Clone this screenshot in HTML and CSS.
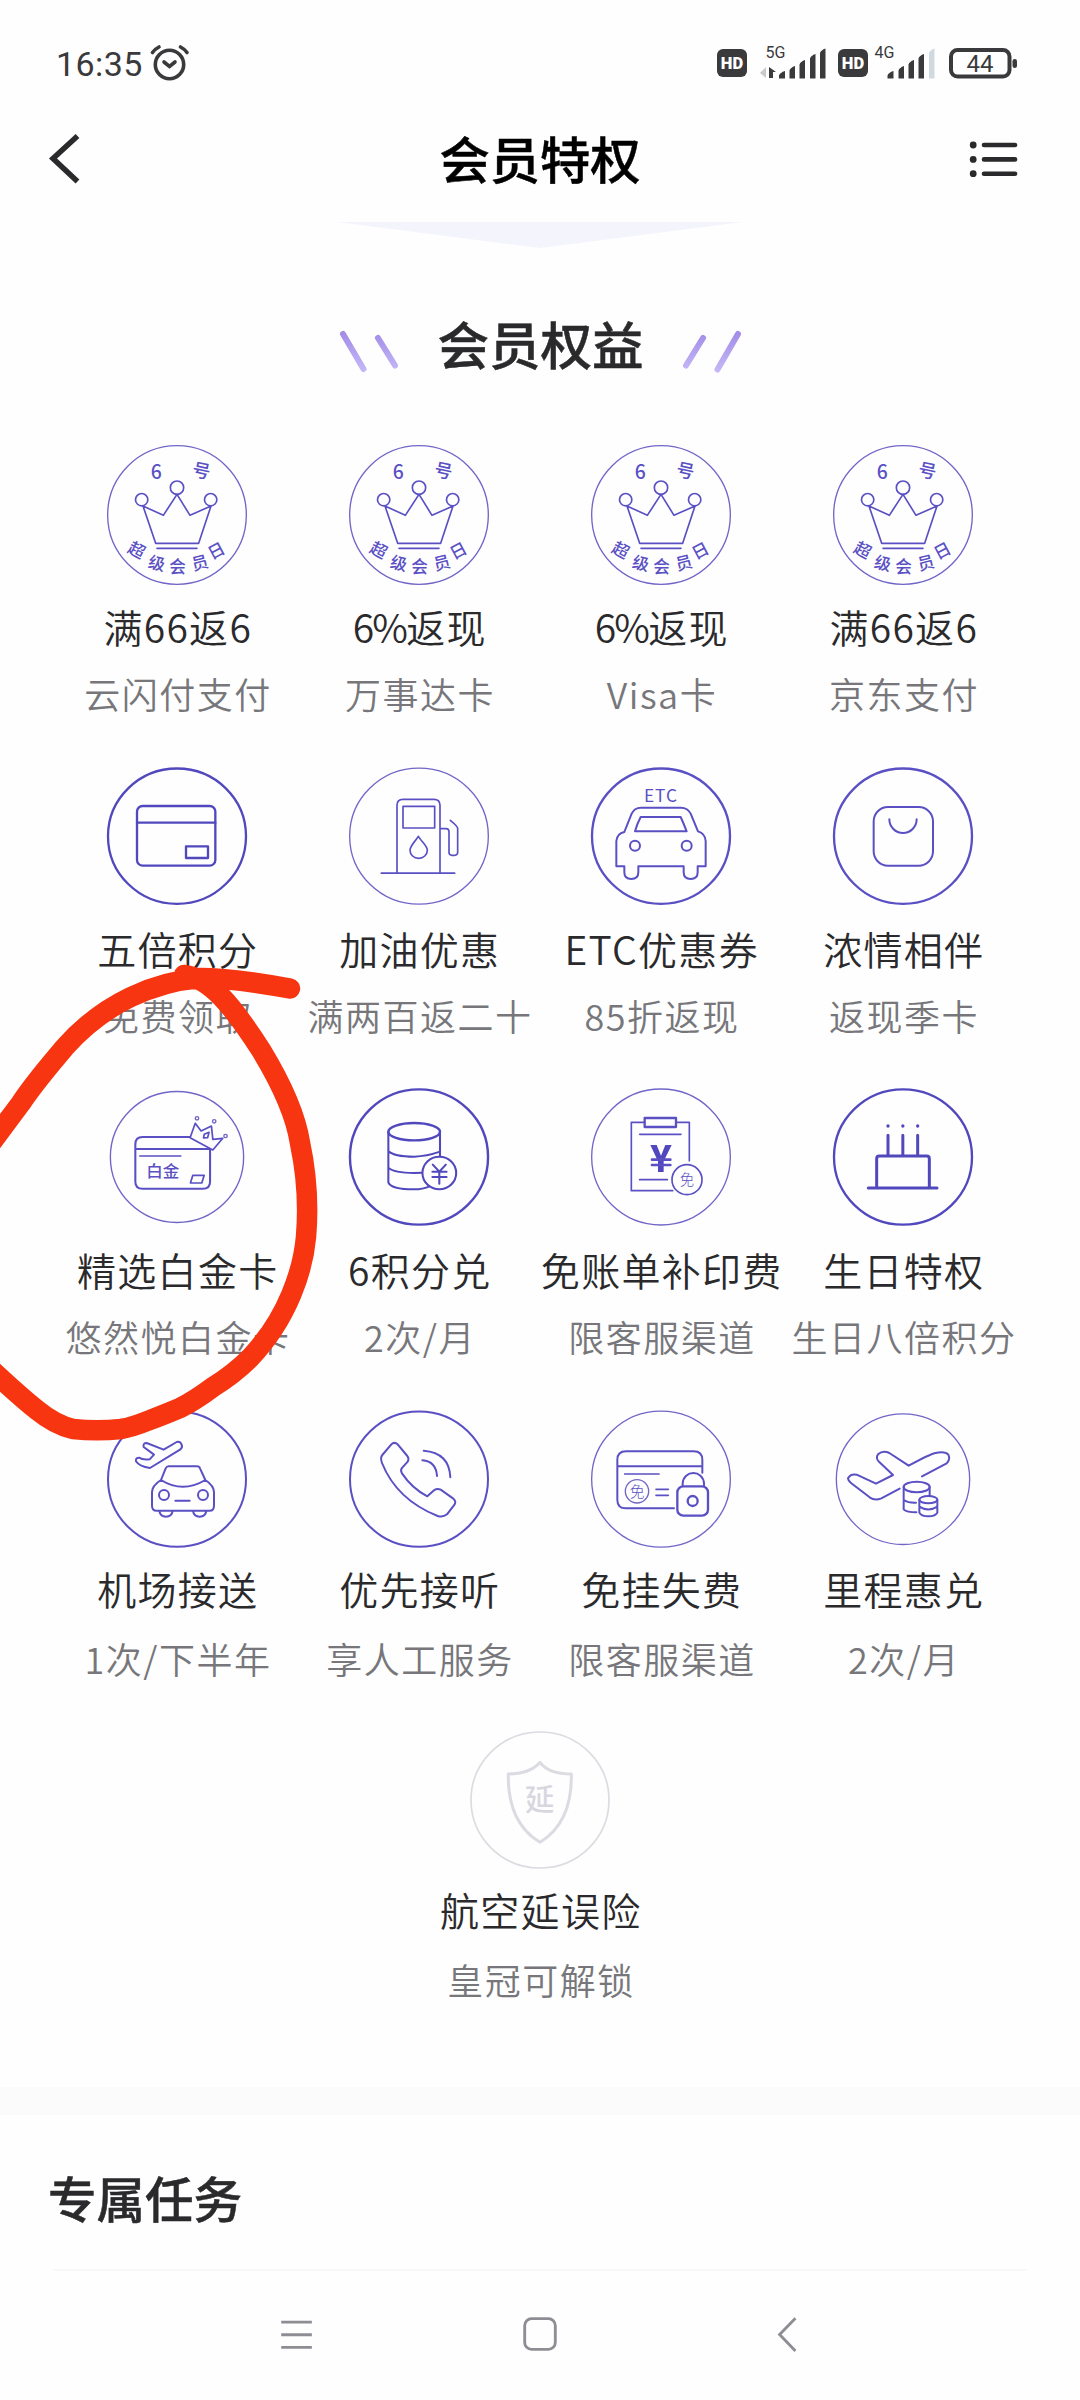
FILE: index.html
```html
<!DOCTYPE html>
<html lang="zh-CN">
<head>
<meta charset="utf-8">
<title>会员特权</title>
<link rel="stylesheet" href="styles.css">
</head>
<body>
<div class="screen">
  <div class="status">
    <span class="clock">16:35</span>
    <svg class="alarm" viewBox="149 43 42 40"><circle cx="169.500" cy="64.500" r="14.200"/><path d="M164 62l5.500 4.500 5.500-4.500M152.500 52.500q2.500-3.500 6.500-5.500M187 52.500q-2.500-3.500-6.500-5.500"/></svg>
    <svg class="signals" viewBox="717 40 301 45">
      <rect x="717" y="49" width="30" height="28" rx="6"/>
      <rect x="838" y="49" width="30" height="28" rx="6"/>
      <text class="hd" x="732" y="69">HD</text><text class="hd" x="853" y="69">HD</text>
      <text class="net" x="765.500" y="58">5G</text><text class="net" x="874.500" y="58">4G</text>
      <path fill="#c9cacc" d="M766 67v11l-6-5z"/>
      <path d="M769 67l7 5h-3v6h-4z"/>
      <path d="M779 78.500v-3q1-3 6-4.500v7.500zM789.500 78.500v-8q1-3 5.500-4.500v12.500zM799.500 78.500v-14q1-3 5.500-4.500v18.500zM810 78.500v-20q1-3 5.500-4.500v24.500zM820 78.500v-25.500q1-3 5.500-4.500v30z"/>
      <path d="M887.500 78.500v-3q1-3 6-4.500v7.500zM898.500 78.500v-8q1-3 5.500-4.500v12.500zM908.500 78.500v-14q1-3 5.500-4.500v18.500zM918.500 78.500v-20q1-3 5.500-4.500v24.500z"/>
      <path fill="#d0d8e0" d="M929 78.500v-25.500q1-3 5.500-4.500v30z"/>
      <rect class="battery" x="951" y="50" width="58.500" height="26.500" rx="6.500"/>
      <rect x="1012.500" y="59" width="4.500" height="9" rx="2.200"/>
      <text class="level" x="980" y="72">44</text>
    </svg>
  </div>

  <header class="topbar">
    <svg class="back" viewBox="0 0 32 48"><path d="M29.500 1L5 23.500 29.500 46.500"/></svg>
    <h1>会员特权</h1>
    <svg class="list" viewBox="970 140 48 37"><circle cx="973.200" cy="144" r="3.400"/><circle cx="973.200" cy="158.400" r="3.400"/><circle cx="973.200" cy="172.700" r="3.400"/><path d="M984 144h31M984 158.400h31M984 172.700h31"/></svg>
  </header>

  <div class="notch"></div>

  <div class="heading">
    <svg viewBox="0 0 60 42"><defs><linearGradient id="fade" gradientUnits="userSpaceOnUse" x1="0" y1="0" x2="0" y2="42"><stop offset="0" stop-color="#a08ae6"/><stop offset="1" stop-color="#c6b8f8"/></linearGradient></defs><path stroke="url(#fade)" d="M3 4L23.500 39M38 8L55 35.500"/></svg>
    <h2>会员权益</h2>
    <svg viewBox="0 0 60 42"><path stroke="url(#fade)" d="M57 4L36.500 39.500M22 8L5 35.500"/></svg>
  </div>

  <svg class="defs"><symbol id="crown" viewBox="127 59 450 450">
    <circle class="thin" cx="352" cy="284" r="208"/>
    <circle cx="352" cy="202" r="20"/><circle cx="246" cy="238" r="18.500"/><circle cx="453" cy="238" r="18.500"/>
    <path d="M250 257L311 285 352 222 391 285 454 257 417 369H288zM292 384H412"/>
    <g class="label seal"><text transform="translate(290 155)" y="20" font-size="58">6</text>
    <text transform="translate(425 154) rotate(12)" y="17" font-size="54">号</text>
    <text transform="translate(230 391) rotate(28)" y="16" font-size="50">超</text>
    <text transform="translate(291 431) rotate(14)" y="16" font-size="50">级</text>
    <text transform="translate(354 443)" y="16" font-size="50">会</text>
    <text transform="translate(421 430) rotate(-14)" y="16" font-size="50">员</text>
    <text transform="translate(471 393) rotate(-28)" y="16" font-size="50">日</text></g>
  </symbol></svg>

  <main class="grid">
    <section class="item first"><svg class="icon"><use href="#crown"/></svg><h3>满66返6</h3><p>云闪付支付</p></section>
    <section class="item first"><svg class="icon"><use href="#crown"/></svg><h3><span class="tight">6%</span>返现</h3><p>万事达卡</p></section>
    <section class="item first"><svg class="icon"><use href="#crown"/></svg><h3><span class="tight">6%</span>返现</h3><p>Visa卡</p></section>
    <section class="item first"><svg class="icon"><use href="#crown"/></svg><h3>满66返6</h3><p>京东支付</p></section>

    <section class="item"><svg class="icon bold" viewBox="127 60 450 450"><ellipse cx="352" cy="285.500" rx="207" ry="203"/><rect x="232" y="195" width="235" height="179" rx="17"/><path d="M232 245H467"/><rect x="379" y="316" width="66" height="35"/></svg><h3>五倍积分</h3><p>免费领取</p></section>
    <section class="item"><svg class="icon" viewBox="852 60 450 450"><ellipse class="thin" cx="1077" cy="285.500" rx="208" ry="204"/><path d="M1011 396V193Q1011 175 1029 175H1122Q1140 175 1140 193V396M964 396.500H1184M1029 196H1124V261H1029zM1075 286C1064 304 1050 314 1050 328A26 24 0 0 0 1102 328C1102 314 1086 304 1075 286zM1140 263H1158Q1167 263 1167 272V334Q1167 343 1176 343H1184Q1193 343 1193 334V262Q1193 256 1171 238"/></svg><h3>加油优惠</h3><p>满两百返二十</p></section>
    <section class="item"><svg class="icon" viewBox="79 60 450 450"><ellipse class="strong" cx="304" cy="285.500" rx="207" ry="203"/><g class="mid"><path d="M170 376V300Q172 278 194 273L216 218Q224 200 244 200H364Q384 200 393 218L415 271Q437 278 438 300V376H414V394Q414 414 393 414T372 394V376H236V394Q236 414 215 414T194 394V376zM243 228H363Q373 250 381 271H226Q232 249 243 228z"/><circle cx="226" cy="314" r="15"/><circle cx="381" cy="314" r="15"/></g><text class="label" x="304" y="182" font-size="52" letter-spacing="3">ETC</text></svg><h3>ETC优惠券</h3><p>85折返现</p></section>
    <section class="item"><svg class="icon" viewBox="805 60 450 450"><ellipse class="strong" cx="1030" cy="285.500" rx="207" ry="203"/><g class="mid"><rect x="942" y="198" width="178" height="176" rx="43"/><path d="M989 235A41 41 0 0 0 1071 235"/></g></svg><h3>浓情相伴</h3><p>返现季卡</p></section>

    <section class="item"><svg class="icon" preserveAspectRatio="none" viewBox="297.200 95 435.600 450"><ellipse class="thin" cx="515" cy="320" rx="193.500" ry="196.500"/><g class="mid"><path d="M553 260H415Q394 260 394 282V394Q394 415 415 415H590Q611 415 611 394V297M394 296H611"/></g><path d="M407 317H526M561 375H594L587 398H554zM553 262L568 219 585 242 615 227 619 267 648 264 619 299zM594 252L608 246 604 262 592 263z"/><circle class="thin" cx="573" cy="204" r="5"/><circle class="thin" cx="623" cy="213" r="5"/><circle class="thin" cx="656" cy="257" r="5"/><text class="label seal" x="474" y="381" font-size="48">白金</text></svg><h3>精选白金卡</h3><p>悠然悦白金卡</p></section>
    <section class="item"><svg class="icon bold" preserveAspectRatio="none" viewBox="1000.200 95 435.600 450"><ellipse cx="1218" cy="320" rx="200.500" ry="203"/><ellipse cx="1204" cy="244" rx="75" ry="26"/><path class="mid" d="M1129 244V396Q1136 417 1204 417Q1229 417 1249 408M1279 244V317M1129 302Q1145 319 1204 319Q1240 318 1279 304M1129 352Q1145 368 1204 368L1227 367"/><circle class="mid" cx="1277" cy="368" r="49"/><path class="mid" d="M1258 343L1277 364 1296 343M1277 364V400M1257 364H1298M1257 380H1298"/></svg><h3>6积分兑</h3><p>2次/月</p></section>
    <section class="item"><svg class="icon" viewBox="139 66 450 450"><ellipse class="thin" cx="364" cy="291" rx="208" ry="204"/><path d="M314 187H275V392H399M410 187H449V302M300 223H424M300 359H383"/><rect class="strong" x="315" y="174" width="94" height="27"/><path class="yen" d="M332 255H351L364 287 377 255H396L372 304V336H355V304z"/><path stroke-width="8" d="M337 299H392M337 315H392"/><circle cx="442" cy="359" r="45"/><text class="label light" x="442" y="375" font-size="43">免</text></svg><h3>免账单补印费</h3><p>限客服渠道</p></section>
    <section class="item"><svg class="icon bold" viewBox="865 66 450 450"><ellipse cx="1090" cy="291" rx="207" ry="203"/><path stroke-width="9" d="M1045 226V286M1089.500 226V286M1134 226V286M1011 382V296Q1011 288 1019 288H1161Q1169 288 1169 296V382M986 384H1192"/><circle class="dot" cx="1045" cy="198" r="5"/><circle class="dot" cx="1089.500" cy="198" r="5"/><circle class="dot" cx="1134" cy="198" r="5"/></svg><h3>生日特权</h3><p>生日八倍积分</p></section>

    <section class="item low"><svg class="icon" viewBox="127 70 450 450"><ellipse class="mid" cx="352" cy="295.500" rx="207" ry="203"/><g class="mid"><path d="M271 262Q239 258 229 242Q227 231 238 231Q250 239 270 236L283 222 252 199Q249 187 261 187L312 207 351 184Q361 181 366 192Q370 200 361 207zM304 298L318 263Q321 257 327 257H412Q419 257 421 263L437 298Q463 315 463 335V375Q463 390 450 390H291Q277 390 277 375V335Q277 315 304 298M304 298Q369 339 437 298M347 360H390M299 391Q302 408 319 408T339 391M400 391Q403 408 420 408T440 391"/><circle cx="313" cy="343" r="15"/><circle cx="430" cy="343" r="15"/></g></svg><h3>机场接送</h3><p>1次/下半年</p></section>
    <section class="item low"><svg class="icon" viewBox="852 70 450 450"><ellipse class="mid" cx="1077" cy="295.500" rx="207" ry="203"/><path class="mid" d="M994 191Q1003 182 1013 191L1042 226Q1048 234 1043 243L1025 263Q1021 270 1026 278Q1055 322 1102 347L1123 328Q1132 322 1142 327L1180 354Q1189 361 1184 371L1161 401Q1149 411 1133 406Q1010 357 966 247Q960 231 967 223zM1087 239Q1128 242 1131 286M1091 210Q1168 216 1171 290"/></svg><h3>优先接听</h3><p>享人工服务</p></section>
    <section class="item low"><svg class="icon" viewBox="79 70 450 450"><ellipse class="thin" cx="304" cy="295.500" rx="208" ry="204"/><path class="mid" d="M428 276V238Q428 212 402 212H199Q173 212 173 238V357Q173 383 199 383H343M173 257H428M369 317V308C371 267 431 267 433 308V317"/><path d="M195 280H298M289 326H326M289 344H326"/><circle class="thin" cx="232" cy="332" r="35"/><rect class="strong" x="353" y="317" width="92" height="88" rx="18"/><circle class="strong" cx="399" cy="361" r="15"/><text class="label light" x="232" y="348" font-size="44">免</text></svg><h3>免挂失费</h3><p>限客服渠道</p></section>
    <section class="item low"><svg class="icon" viewBox="805 70 450 450"><ellipse class="thin" cx="1030" cy="295.500" rx="200" ry="196"/><path class="mid" d="M1087 287L1161 248Q1173 236 1166 222Q1157 211 1127 217Q1110 221 1047 255L989 217Q970 208 955 221Q947 233 958 243L1000 283 949 309 891 282Q873 278 865 293Q866 301 873 306L930 350Q945 361 965 353L1020 324"/><g class="mid"><ellipse cx="1071" cy="319" rx="39" ry="16"/><path d="M1032 319V386Q1041 395 1070 395M1110 319V346M1032 358Q1046 367 1069 366"/><ellipse cx="1106" cy="357" rx="27" ry="11"/><path d="M1079 357V396Q1084 407 1106 407T1133 396V357M1079 378Q1106 395 1133 378"/></g></svg><h3>里程惠兑</h3><p>2次/月</p></section>

    <section class="item low locked"><svg class="icon" viewBox="195 76 450 450"><ellipse cx="420" cy="301" rx="207" ry="204"/><path stroke-width="9" d="M420 188C397 215 367 223 325 223C323 319 354 388 420 428C485 388 516 319 514 223C473 223 440 215 420 188z"/><text class="label seal" x="419" y="332" font-size="88">延</text></svg><h3>航空延误险</h3><p>皇冠可解锁</p></section>
  </main>

  <div class="band"></div>
  <section class="tasks"><h2>专属任务</h2></section>

  <nav class="navbar">
    <svg viewBox="0 0 34 36"><path d="M3 6.700h29M3 18.700h29M3 30.700h29"/></svg>
    <svg viewBox="0 0 34 36"><rect x="2.500" y="3.500" width="29" height="29" rx="6.500"/></svg>
    <svg viewBox="0 0 34 36"><path d="M25 3L10 18.500 25 34"/></svg>
  </nav>

  <svg class="scribble" viewBox="0 940 340 520"><path d="M290 988.500C255 982 225 978 200 978C155 982 105 1002 65 1047C50 1065 35 1082 21 1103L-8 1142M184 975C210 978 232 1005 261 1050C275 1073 295 1110 300 1143Q310 1190 306 1237C303 1270 288 1318 250 1358C240 1368 226 1379 213 1387C197 1399 188 1404 180 1408C168 1413 158 1417 150 1420C135 1426 128 1428 121 1429Q97 1431.500 73 1429C60 1426 48 1419 37 1410Q18 1395 -18 1361"/></svg>
</div>
</body>
</html>
```
FILE: styles.css
```css
* { box-sizing: border-box; }
body { margin: 0; background: #fefefe; }
h1, h2, h3, p { margin: 0; white-space: nowrap; }
svg { display: block; overflow: visible; }

.screen {
  position: relative;
  width: 1080px;
  height: 2400px;
  overflow: hidden;
  background: #fefefe;
  font-family: "Noto Sans CJK SC", sans-serif;
  color: #2a2a2c;
  display: flex;
  flex-direction: column;
}

.status {
  height: 110px;
  padding: 40px 62px 25px 56px;
  display: flex;
  align-items: center;
  color: #3a3a3c;
}
.clock {
  font: 400 34px/45px Roboto, sans-serif;
  letter-spacing: 0.4px;
  width: 93px;
  padding-top: 3px;
}
.alarm { width: 42px; height: 40px; fill: none; stroke: #3a3a3c; stroke-width: 3.6; stroke-linecap: round; }
.signals { width: 301px; height: 45px; margin-left: auto; fill: #3a3a3c; font-family: Roboto, sans-serif; }
.hd { fill: #fff; font-size: 16.500px; font-weight: 900; text-anchor: middle; }
.net { font-size: 16px; }
.level { font-size: 24px; text-anchor: middle; }
.battery { fill: none; stroke: #3a3a3c; stroke-width: 4; }

.topbar {
  height: 112px;
  padding: 0 62px 14px 48px;
  display: flex;
  align-items: center;
  justify-content: space-between;
}
.topbar h1 { font-size: 50.300px; line-height: 60px; font-weight: 500; color: #000; -webkit-text-stroke: 0.5px #000; margin: -5px 0 0 30px; }
.back { width: 32px; height: 48px; fill: none; stroke: #2a2a2c; stroke-width: 5.500; }
.list { width: 48px; height: 37px; fill: #2a2a2c; stroke: none; }
.list path { stroke: #2a2a2c; stroke-width: 4.600; stroke-linecap: round; }

.notch {
  width: 406px;
  height: 26px;
  margin: 0 auto;
  background: #f4f4fd;
  clip-path: polygon(0 0, 100% 0, 50% 100%);
}

.heading {
  height: 78px;
  margin-top: 56px;
  padding-left: 1px;
  display: flex;
  justify-content: center;
  align-items: center;
  gap: 37px;
}
.heading h2 { font-size: 51.500px; line-height: 78px; font-weight: 500; -webkit-text-stroke: 0.5px #2a2a2c; }
.heading svg { width: 60px; height: 42px; margin-top: 16px; fill: none; stroke-width: 6; stroke-linecap: round; }

.defs { display: none; }
.grid {
  margin-top: 57px;
  padding: 0 56px;
  display: flex;
  flex-wrap: wrap;
  justify-content: center;
}
.item {
  width: 242px;
  height: 321.500px;
  display: flex;
  flex-direction: column;
  align-items: center;
}
.icon {
  width: 150px;
  height: 150px;
  flex: none;
  fill: none;
  stroke: #5a50c4;
  stroke-width: 5;
  stroke-linecap: round;
  stroke-linejoin: round;
}
.icon.bold { stroke-width: 7; stroke: #5148bd; }
.icon .mid, .icon.bold .mid { stroke-width: 6; }
.icon .strong { stroke-width: 7; }
.thin { stroke-width: 4; stroke: #7166c8; }
.dot { fill: #5148bd; stroke: none; }
.yen { fill: #5148bd; stroke: none; }
.label { fill: #5a50c4; stroke: none; text-anchor: middle; }
.label.light { font-weight: 300; }
.label.seal { font-weight: 500; }
.item h3 { font-size: 39px; line-height: 56px; margin: 9px 0 0 1.500px; letter-spacing: 1.300px; font-weight: 350; }
.item p { font-size: 36px; line-height: 50px; margin: 14px 0 0 2px; letter-spacing: 1.500px; font-weight: 350; color: #77777b; }
.item .tight { letter-spacing: -1.800px; }
.first .icon { position: relative; top: 1px; }
.low h3 { margin-top: 6px; }
.low p { margin-top: 17px; }
.locked .icon { stroke: #dcdbe2; }
.locked .label { fill: #d8d7df; }

.band { height: 28px; margin-top: 40px; background: #fbfbfc; }
.tasks {
  height: 156px;
  margin: 0 53px;
  border-bottom: 2px solid #f8f8f9;
  display: flex;
  align-items: center;
}
.tasks h2 { font-size: 48.500px; line-height: 60px; font-weight: 500; margin: 10px 0 0 -5px; -webkit-text-stroke: 0.5px #2a2a2c; }

.navbar {
  flex: 1;
  padding: 44px 275px 0 278px;
  display: flex;
  justify-content: space-between;
}
.navbar svg { width: 36px; height: 38px; fill: none; stroke: #8d8d94; stroke-width: 2.700; }
.navbar svg:nth-child(2) { margin-right: 3px; }

/* hand-drawn marker over the page */
.scribble {
  position: absolute;
  left: 0;
  top: 940px;
  width: 340px;
  height: 520px;
  fill: none;
  stroke: #f73510;
  stroke-width: 20.500;
  stroke-linecap: round;
  stroke-linejoin: round;
}
```
